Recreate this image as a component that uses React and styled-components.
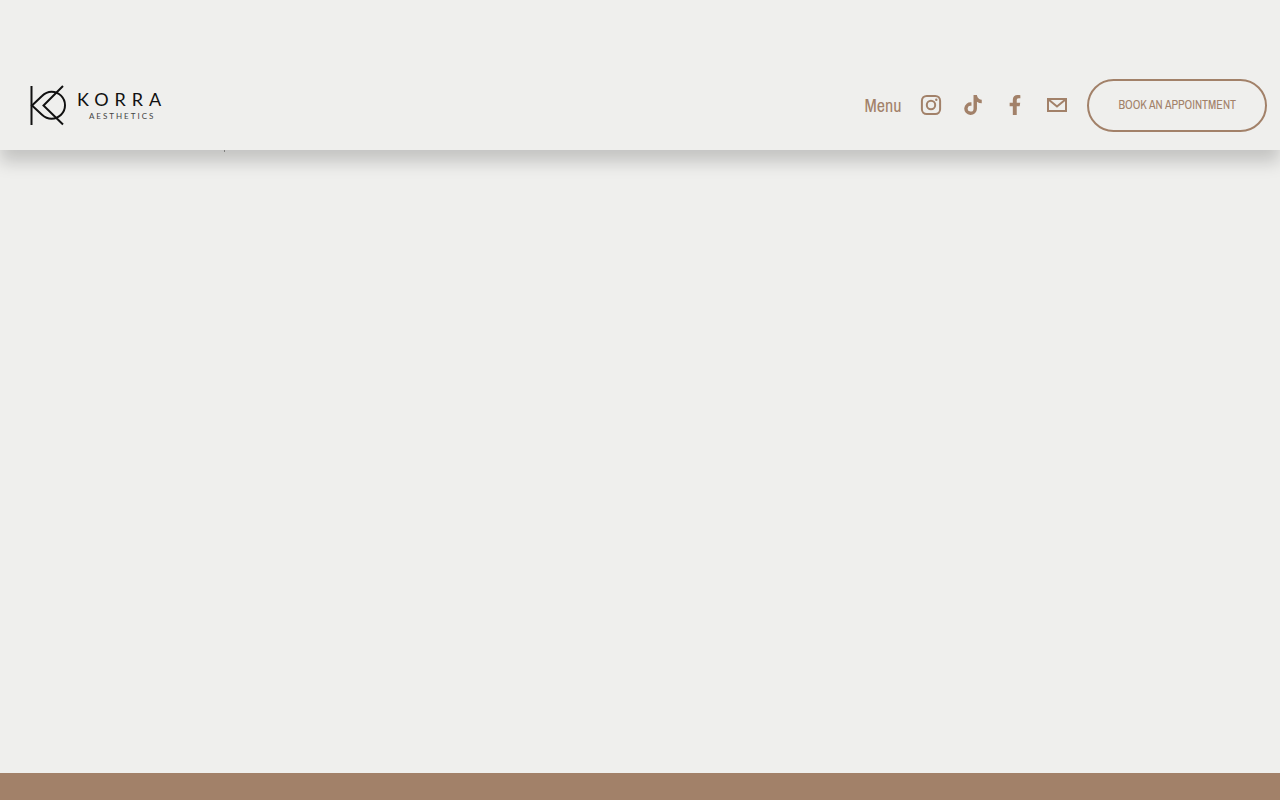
import React from 'react';
import styled, { createGlobalStyle } from 'styled-components';
import { FaFacebookF, FaTiktok } from 'react-icons/fa';

const App = () => {
  return (
    <Page>
      <GlobalStyle />
      <Header>
        <Logo href="#home" aria-label="Korra Aesthetics">
          <LogoMark viewBox="0 0 36 41" aria-hidden="true">
            <path d="M1.500 1V40M33 1L13.500 20.500L33 39.500" />
            <path d="M2 20.500L12 11C15 8 18 6.700 21.500 6.700A13.500 13.500 0 0 1 21.500 33.700C18 33.700 15 32.500 12 29.700Z" />
          </LogoMark>
          <LogoText>
            <LogoName>KORRA</LogoName>
            <LogoSub>AESTHETICS</LogoSub>
          </LogoText>
        </Logo>
        <Nav>
          <MenuLink href="#menu">Menu</MenuLink>
          <SocialLink href="#instagram" aria-label="Instagram">
            <OutlineIcon viewBox="0 0 24 24" aria-hidden="true">
              <rect x="2.900" y="2.900" width="18.200" height="18.200" rx="4.800" />
              <circle cx="12" cy="12" r="4.200" />
              <circle className="dot" cx="17.300" cy="6.700" r="1.200" />
            </OutlineIcon>
          </SocialLink>
          <SocialLink href="#tiktok" aria-label="TikTok">
            <FaTiktok size={20} />
          </SocialLink>
          <SocialLink href="#facebook" aria-label="Facebook">
            <FaFacebookF size={20} />
          </SocialLink>
          <SocialLink href="#email" aria-label="Email">
            <OutlineIcon viewBox="0 0 24 24" aria-hidden="true">
              <path d="M3 6H21V18H3ZM3.500 6.500L12 13.500L20.500 6.500" />
            </OutlineIcon>
          </SocialLink>
          <BookLink href="#book">BOOK AN APPOINTMENT</BookLink>
        </Nav>
      </Header>
      <Main>
        <Tick />
      </Main>
      <Footer />
    </Page>
  );
};

export default App;

const GlobalStyle = createGlobalStyle`
  * {
    box-sizing: border-box;
  }

  body {
    margin: 0;
    background-color: #efefed;
    color: #a28169;
    font-family: 'Archivo Narrow', 'Roboto Condensed', Roboto, sans-serif;
  }

  a {
    color: inherit;
    text-decoration: none;
  }
`;

const Page = styled.div`
  display: flex;
  flex-direction: column;
  min-height: 100vh;
`;

const Header = styled.header`
  display: flex;
  align-items: center;
  justify-content: space-between;
  padding: 79px 13px 18px 30px;
  background-color: #efefed;
  box-shadow: 0 12px 16px 0 rgba(0, 0, 0, 0.18);
  clip-path: inset(0 0 -40px 0);
`;

const Logo = styled.a`
  display: flex;
  align-items: center;
  gap: 11px;
  color: #111;
`;

const LogoMark = styled.svg`
  width: 36px;
  height: 41px;
  fill: none;
  stroke: currentColor;
  stroke-width: 2;
`;

const LogoText = styled.span`
  display: flex;
  flex-direction: column;
  align-items: center;
  font-family: Lato, sans-serif;
`;

const LogoName = styled.span`
  font-size: 18px;
  line-height: 20px;
  letter-spacing: 6px;
`;

const LogoSub = styled.span`
  font-size: 8px;
  line-height: 14px;
  letter-spacing: 2px;
  color: #444;
`;

const Nav = styled.nav`
  display: flex;
  align-items: center;
  gap: 18px;
`;

const MenuLink = styled.a`
  font-size: 18px;
  line-height: 24px;
`;

const SocialLink = styled.a`
  display: flex;
  align-items: center;
  justify-content: center;
  width: 24px;
  height: 25px;
  padding-bottom: 1px;
`;

const OutlineIcon = styled.svg`
  width: 24px;
  height: 24px;
  fill: none;
  stroke: currentColor;
  stroke-width: 2;

  .dot {
    fill: currentColor;
    stroke: none;
  }
`;

const BookLink = styled.a`
  padding: 17px 29px;
  border: 2px solid #a28169;
  border-radius: 27px;
  font-size: 12px;
  line-height: 15px;
  white-space: nowrap;
`;

const Main = styled.main`
  flex: 1;
  padding: 0 224px;
`;

const Tick = styled.div`
  width: 1px;
  height: 2px;
  background-color: #9a9a98;
`;

const Footer = styled.footer`
  padding-top: 27px;
  background-color: #a28169;
`;
